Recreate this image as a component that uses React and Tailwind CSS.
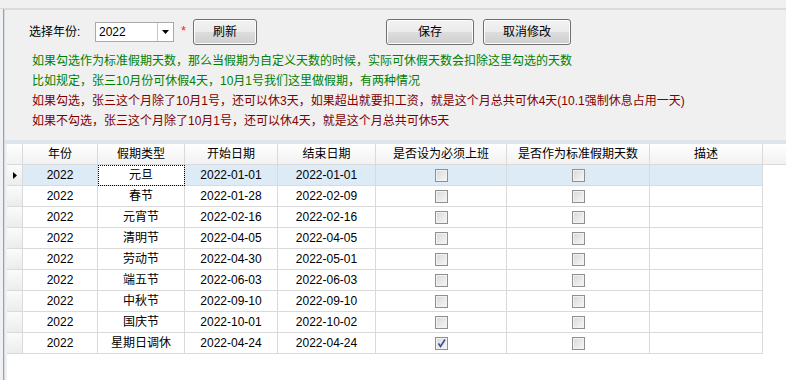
import React from 'react';

const rows = [
  { year: '2022', type: '元旦', start: '2022-01-01', end: '2022-01-01', work: false, std: false },
  { year: '2022', type: '春节', start: '2022-01-28', end: '2022-02-09', work: false, std: false },
  { year: '2022', type: '元宵节', start: '2022-02-16', end: '2022-02-16', work: false, std: false },
  { year: '2022', type: '清明节', start: '2022-04-05', end: '2022-04-05', work: false, std: false },
  { year: '2022', type: '劳动节', start: '2022-04-30', end: '2022-05-01', work: false, std: false },
  { year: '2022', type: '端五节', start: '2022-06-03', end: '2022-06-03', work: false, std: false },
  { year: '2022', type: '中秋节', start: '2022-09-10', end: '2022-09-10', work: false, std: false },
  { year: '2022', type: '国庆节', start: '2022-10-01', end: '2022-10-02', work: false, std: false },
  { year: '2022', type: '星期日调休', start: '2022-04-24', end: '2022-04-24', work: true, std: false },
];

const headers = ['年份', '假期类型', '开始日期', '结束日期', '是否设为必须上班', '是否作为标准假期天数', '描述'];

function Button({ children, width }) {
  return (
    <button
      className={`${width} h-[26px] rounded-[3px] border border-[#707070] bg-[linear-gradient(#f2f2f2_0%,#ebebeb_50%,#dddddd_50%,#cfcfcf_100%)] shadow-[inset_0_0_0_1px_#fcfcfc] text-[12px] text-black`}
    >
      {children}
    </button>
  );
}

function CheckBox({ checked }) {
  return (
    <span className="relative inline-block w-[13px] h-[13px] border border-[#8e8f8f] bg-gradient-to-br from-[#d8d8d8] to-[#f7f7f7] shadow-[inset_0_0_0_1px_#f2f2f2]">
      {checked && (
        <svg viewBox="0 0 13 13" className="absolute -left-px -top-px w-[13px] h-[13px]">
          <path d="M3.5 6.5 L5.5 9.5 L10 2.5" stroke="#3d4f9e" strokeWidth="1.6" fill="none" />
        </svg>
      )}
    </span>
  );
}

const cols = 'grid grid-cols-[16px_75px_87px_93px_98px_131px_143px_113px]';
const cell = 'h-[21px] border-r border-b border-[#dadada] flex items-center justify-center';

export default function App() {
  return (
    <div className="w-[786px] h-[380px] overflow-hidden bg-[#f0f0f0] text-[12px] text-black font-['Liberation_Sans','Noto_Sans_CJK_SC',sans-serif]">
      <div className="h-[9px] border-b border-[#dadada]" />
      <div className="flex h-[371px]">
        <div className="w-[3px]" />
        <div className="w-px bg-[#a0a0a0]" />
        <div className="flex-1 flex flex-col border-l border-t border-[#d3dce6]">
          {/* top panel */}
          <div className="h-[130px] shrink-0">
            <div className="flex items-center mt-[9px] h-[26px] pl-[24px]">
              <span className="w-[53px]">选择年份:</span>
              <div className="ml-[13px] w-[79px] h-[20px] flex border border-[#a9a9a9] bg-white">
                <span className="flex-1 pl-[3px] leading-[18px] text-[12px]">2022</span>
                <span className="w-[16px] border-l border-[#c8c8c8] flex items-center justify-center">
                  <svg width="7" height="4" viewBox="0 0 7 4">
                    <polygon points="0,0 7,0 3.5,4" fill="#000" />
                  </svg>
                </span>
              </div>
              <span className="ml-[7px] w-[12px] text-[#ff2020] text-[13px] leading-none -mt-[4px]">*</span>
              <Button width="w-[64px]">刷新</Button>
              <div className="ml-[129px] flex gap-[9px]">
                <Button width="w-[88px]">保存</Button>
                <Button width="w-[88px]">取消修改</Button>
              </div>
            </div>
            <div className="mt-[6px] pl-[27px] leading-[20px]">
              <div className="text-[#008000]">如果勾选作为标准假期天数，那么当假期为自定义天数的时候，实际可休假天数会扣除这里勾选的天数</div>
              <div className="text-[#008000]">比如规定，张三10月份可休假4天，10月1号我们这里做假期，有两种情况</div>
              <div className="text-[#800000]">如果勾选，张三这个月除了10月1号，还可以休3天，如果超出就要扣工资，就是这个月总共可休4天(10.1强制休息占用一天)</div>
              <div className="text-[#800000]">如果不勾选，张三这个月除了10月1号，还可以休4天，就是这个月总共可休5天</div>
            </div>
          </div>
          <div className="h-[4px] shrink-0 bg-[#dde5ec]" />
          {/* grid */}
          <div className="flex-1 ml-[2px] bg-white">
            <div className="flex bg-[linear-gradient(#ffffff,#f1f1f1)]">
              <div className={cols}>
                <div className="h-[21px] border-r border-b border-[#dadada]" />
                {headers.map((h) => (
                  <div key={h} className={cell}>{h}</div>
                ))}
              </div>
              <div className="flex-1 h-[21px] border-b border-[#dadada]" />
            </div>
            {rows.map((r, i) => {
              const sel = i === 0;
              const bg = sel ? 'bg-[#dcebf5]' : 'bg-white';
              return (
                <div key={r.type} className={cols}>
                  <div className="h-[21px] border-r border-b border-[#dadada] bg-[linear-gradient(#fbfbfb,#ececec)] flex items-center justify-center">
                    {sel && (
                      <svg width="4" height="7" viewBox="0 0 4 7">
                        <polygon points="0,0 4,3.5 0,7" fill="#000" />
                      </svg>
                    )}
                  </div>
                  <div className={`${cell} ${bg}`}>{r.year}</div>
                  <div className={`${cell} ${sel ? 'bg-white outline-1 outline-dotted outline-black -outline-offset-1' : bg}`}>{r.type}</div>
                  <div className={`${cell} ${bg}`}>{r.start}</div>
                  <div className={`${cell} ${bg}`}>{r.end}</div>
                  <div className={`${cell} ${bg}`}><CheckBox checked={r.work} /></div>
                  <div className={`${cell} ${bg}`}><CheckBox checked={r.std} /></div>
                  <div className={`${cell} ${bg}`} />
                </div>
              );
            })}
          </div>
        </div>
      </div>
    </div>
  );
}
